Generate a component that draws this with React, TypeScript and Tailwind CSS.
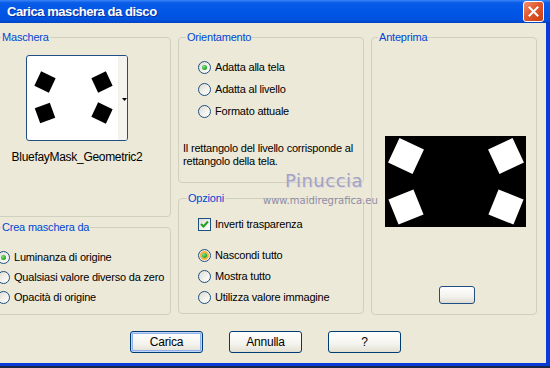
import React from "react";

const font = { fontFamily: '"Liberation Sans", Arial, sans-serif' };

function Radio({ label, checked, hover }: { label: string; checked?: boolean; hover?: boolean }) {
  return (
    <div className="flex items-center gap-[3px]">
      <span className="relative flex h-[13px] w-[13px] shrink-0 items-center justify-center rounded-full border border-[#1c5180] bg-[linear-gradient(135deg,#dcdbd3_0%,#f4f3ee_60%,#ffffff_100%)]">
        {hover && <span className="absolute inset-[1px] rounded-full border-2 border-[#f9b33c]" />}
        {checked && (
          <span className="relative h-[5px] w-[5px] rounded-full bg-[radial-gradient(circle_at_35%_35%,#7fe07f_0%,#21a121_70%)]" />
        )}
      </span>
      <span className="pl-[1px]">{label}</span>
    </div>
  );
}

function Box({
  title,
  legendMl,
  className,
  children,
}: {
  title: string;
  legendMl: string;
  className: string;
  children?: React.ReactNode;
}) {
  return (
    <fieldset className={`rounded-[4px] border border-[#d0d0bf] ${className}`}>
      <legend className={`px-[1px] leading-[14px] text-[#0046d5] ${legendMl}`}>{title}</legend>
      {children}
    </fieldset>
  );
}

function Btn({ label, focused }: { label: string; focused?: boolean }) {
  return (
    <button
      className={`flex h-[22px] w-[73px] items-center justify-center rounded-[3px] border border-[#003c74] bg-[linear-gradient(to_bottom,#ffffff_0%,#f4f3ee_60%,#e3e0d2_100%)] text-[12px] text-black ${
        focused ? "shadow-[inset_0_0_0_1px_#c2d4f7,inset_0_0_0_2px_#8fb0ea]" : ""
      }`}
    >
      {label}
    </button>
  );
}

function Squares({ pts, size }: { pts: [number, number, number][]; size: number }) {
  return (
    <>
      {pts.map(([x, y, r], i) => (
        <rect
          key={i}
          x={x - size / 2}
          y={y - size / 2}
          width={size}
          height={size}
          transform={`rotate(${r} ${x} ${y})`}
        />
      ))}
    </>
  );
}

export default function App() {
  return (
    <div
      className="relative flex h-[368px] w-[550px] flex-col overflow-hidden bg-[#ece9d8] text-[11px] tracking-[-0.2px] text-black"
      style={font}
    >
      {/* title bar */}
      <div className="flex h-[23px] shrink-0 items-center justify-between bg-[linear-gradient(to_bottom,#3a86f7_0%,#0a5ce8_12%,#0056e6_50%,#0052df_85%,#0042c4_100%)] pl-[7px] pr-[6px]">
        <span className="text-[13px] font-bold tracking-[-0.45px] text-white [text-shadow:1px_1px_0_#0a2f9a]">
          Carica maschera da disco
        </span>
        <div className="mb-[1px] flex h-[21px] w-[21px] items-center justify-center rounded-[3px] border border-white bg-[linear-gradient(135deg,#f09274_0%,#e0582d_45%,#c83e14_100%)]">
          <svg width="11" height="11" viewBox="0 0 11 11">
            <path d="M1.5 1.5 L9.5 9.5 M9.5 1.5 L1.5 9.5" stroke="white" strokeWidth="2" strokeLinecap="square" />
          </svg>
        </div>
      </div>

      <div className="flex flex-1 flex-col border-r-4 border-b-[3px] border-[#0a3bd6]">
        <div className="flex pt-[7px]">
          {/* left column */}
          <div className="ml-[-6px] flex w-[177px] flex-col">
            <Box title="Maschera" legendMl="ml-[6px]" className="h-[187px]">
              <div className="ml-[31px] mt-[11px] flex w-[102px] flex-col items-center">
                <div className="flex h-[86px] w-[102px] overflow-hidden rounded-[3px] border border-[#1f4f82] bg-white">
                  <svg width="91" height="84" viewBox="0 0 91 84" className="shrink-0">
                    <Squares
                      size={16}
                      pts={[
                        [18, 26, 25],
                        [75, 26, -25],
                        [18, 57, -20],
                        [75, 57, 25],
                      ]}
                    />
                  </svg>
                  <div className="flex flex-1 items-center justify-center border-l border-[#f0efe8] bg-[#f4f3ee]">
                    <svg width="5" height="3" viewBox="0 0 5 3" className="ml-[2px] mt-[2px]">
                      <path d="M0 0 H5 L2.5 3 Z" fill="black" />
                    </svg>
                  </div>
                </div>
                <span className="mt-[9px] whitespace-nowrap text-[12px] leading-[14px] tracking-[-0.3px]">
                  BluefayMask_Geometric2
                </span>
              </div>
            </Box>
            <Box title="Crea maschera da" legendMl="ml-[6px]" className="mt-[3px] h-[95px]">
              <div className="ml-[2px] mt-[13px] flex flex-col">
                <div className="flex h-[20px] items-center">
                  <Radio label="Luminanza di origine" checked />
                </div>
                <div className="flex h-[20px] items-center">
                  <Radio label="Qualsiasi valore diverso da zero" />
                </div>
                <div className="flex h-[20px] items-center">
                  <Radio label="Opacità di origine" />
                </div>
              </div>
            </Box>
          </div>

          {/* middle column */}
          <div className="ml-[7px] flex w-[186px] flex-col">
            <Box title="Orientamento" legendMl="ml-[7px]" className="h-[153px]">
              <div className="ml-[19px] mt-[12px] flex flex-col">
                <div className="flex h-[22px] items-center">
                  <Radio label="Adatta alla tela" checked />
                </div>
                <div className="flex h-[22px] items-center">
                  <Radio label="Adatta al livello" />
                </div>
                <div className="flex h-[22px] items-center">
                  <Radio label="Formato attuale" />
                </div>
              </div>
              <p className="ml-[4px] mt-[20px] leading-[13px]">
                Il rettangolo del livello corrisponde al
                <br />
                rettangolo della tela.
              </p>
            </Box>
            <Box title="Opzioni" legendMl="ml-[8px]" className="mt-[8px] h-[123px]">
              <div className="ml-[19px] mt-[9px] flex flex-col">
                <div className="flex h-[20px] items-center gap-[4px]">
                  <span className="flex h-[13px] w-[13px] items-center justify-center border border-[#1c5180] bg-[linear-gradient(135deg,#dcdbd3_0%,#f4f3ee_60%,#ffffff_100%)]">
                    <svg width="9" height="9" viewBox="0 0 9 9">
                      <path d="M1 4 L3.5 6.5 L8 1.5" stroke="#21a121" strokeWidth="2" fill="none" />
                    </svg>
                  </span>
                  <span>Inverti trasparenza</span>
                </div>
                <div className="mt-[11px] flex h-[21px] items-center">
                  <Radio label="Nascondi tutto" checked hover />
                </div>
                <div className="flex h-[21px] items-center">
                  <Radio label="Mostra tutto" />
                </div>
                <div className="flex h-[21px] items-center">
                  <Radio label="Utilizza valore immagine" />
                </div>
              </div>
            </Box>
          </div>

          {/* right column */}
          <div className="ml-[7px] flex w-[166px] flex-col">
            <Box title="Anteprima" legendMl="ml-[6px]" className="h-[285px]">
              <div className="ml-[13px] mt-[92px] h-[91px] w-[141px] bg-black">
                <svg width="141" height="91" viewBox="0 0 141 91" fill="white">
                  <Squares
                    size={27}
                    pts={[
                      [21, 20, 25],
                      [121, 20, -25],
                      [21, 71, -22],
                      [121, 71, 22],
                    ]}
                  />
                </svg>
              </div>
              <button className="ml-[67px] mt-[59px] h-[18px] w-[36px] rounded-[3px] border border-[#1f4f82] bg-[linear-gradient(to_bottom,#ffffff_0%,#f2f1ec_60%,#dedbd0_100%)]" />
            </Box>
          </div>
        </div>

        {/* buttons */}
        <div className="ml-[130px] mt-[16px] flex gap-[26px]">
          <Btn label="Carica" focused />
          <Btn label="Annulla" />
          <Btn label="?" />
        </div>
      </div>
      <div className="h-[2px] shrink-0 bg-[#1b2747]" />

      {/* watermark */}
      <span
        className="pointer-events-none absolute left-[285px] top-[170px] text-[18px] leading-[22px] tracking-[0.5px] text-[#a6a2bf] [text-shadow:1px_1px_0_#d8d6e4]"
        style={{ fontFamily: '"DejaVu Sans", sans-serif' }}
      >
        Pinuccia
      </span>
      <span
        className="pointer-events-none absolute left-[263px] top-[195px] text-[10px] leading-[12px] tracking-[0px] text-[#8f8ca6]"
        style={{ fontFamily: '"DejaVu Sans", sans-serif' }}
      >
        www.maidiregrafica.eu
      </span>
    </div>
  );
}
